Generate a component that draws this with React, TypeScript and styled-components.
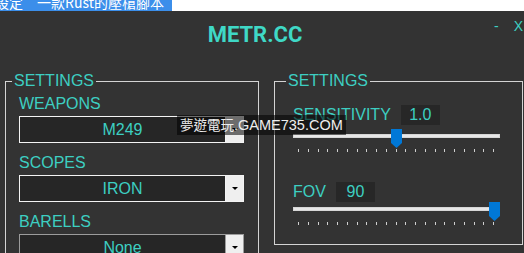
import React from 'react';
import styled, { createGlobalStyle } from 'styled-components';

const TEAL = '#3dcfc2';

const GlobalStyle = createGlobalStyle`
  html, body {
    margin: 0;
    padding: 0;
    background: #ffffff;
  }
  body {
    font-family: 'Liberation Sans', Arial, sans-serif;
  }
`;

interface SelectProps {
  value: string;
  active?: boolean;
}

const Dropdown: React.FC<SelectProps> = ({ value, active }) => (
  <Select $active={active}>
    <SelectValue>{value}</SelectValue>
    <SelectButton $active={active}>
      <Caret />
    </SelectButton>
  </Select>
);

interface SliderProps {
  label: string;
  value: string;
  fraction: number;
  offset: number;
}

const TRACK_WIDTH = 207;
const TICKS = 21;

const SliderField: React.FC<SliderProps> = ({ label, value, fraction, offset }) => {
  const center = 5 + fraction * (TRACK_WIDTH - 11);
  return (
    <SliderBlock>
      <ValueRow>
        <Label>{label}</Label>
        <ValueBox>{value}</ValueBox>
      </ValueRow>
      <TrackArea $offset={offset}>
        <Track />
        <Thumb
          style={{ left: center - 5 }}
          width="11"
          height="19"
          viewBox="0 0 11 19"
        >
          <polygon points="0,0 11,0 11,14 5.5,19 0,14" fill="#0078d7" />
        </Thumb>
      </TrackArea>
      <Ticks>
        {Array.from({ length: TICKS }).map((_, i) => (
          <Tick key={i} />
        ))}
      </Ticks>
    </SliderBlock>
  );
};

const App: React.FC = () => {
  return (
    <>
      <GlobalStyle />
      <TopStrip>
        <Tab>
          <TabText>設定　一款Rust的壓槍腳本</TabText>
        </Tab>
      </TopStrip>

      <Window>
        <TitleBar>
          <span />
          <Title>METR.CC</Title>
          <Controls>
            <span>-</span>
            <span>X</span>
          </Controls>
        </TitleBar>

        <Body>
          <LeftGroup>
            <Legend>SETTINGS</Legend>
            <Field>
              <Label>WEAPONS</Label>
              <Dropdown value="M249" active />
            </Field>
            <Field>
              <Label>SCOPES</Label>
              <Dropdown value="IRON" active />
            </Field>
            <Field>
              <Label>BARELLS</Label>
              <Dropdown value="None" />
            </Field>
          </LeftGroup>

          <RightGroup>
            <Legend>SETTINGS</Legend>
            <SliderField label="SENSITIVITY" value="1.0" fraction={0.5} offset={4} />
            <SliderField label="FOV" value="90" fraction={1} offset={0} />
          </RightGroup>
        </Body>

        <Watermark>
          <WatermarkCjk>夢遊電玩</WatermarkCjk>.GAME735.COM
        </Watermark>
      </Window>
    </>
  );
};

export default App;

// Styles
const TopStrip = styled.div`
  display: flex;
  height: 11px;
  background: #ffffff;
`;

const Tab = styled.div`
  width: 172px;
  background: #3b8eea;
  overflow: hidden;
  display: flex;
  align-items: flex-end;
`;

const TabText = styled.span`
  margin-left: -5px;
  margin-bottom: 1px;
  color: #ffffff;
  font-family: 'Noto Sans CJK TC', 'Liberation Sans', sans-serif;
  font-size: 14px;
  line-height: 16px;
  white-space: nowrap;
`;

const Window = styled.div`
  position: relative;
  height: 242px;
  background: #333333;
  overflow: hidden;
`;

const TitleBar = styled.div`
  display: grid;
  grid-template-columns: 1fr auto 1fr;
  align-items: start;
`;

const Title = styled.div`
  margin-top: 11px;
  margin-right: 14px;
  font-family: Roboto, 'Liberation Sans', sans-serif;
  font-weight: 700;
  font-size: 22px;
  line-height: 26px;
  color: #3fd8c6;
`;

const Controls = styled.div`
  justify-self: end;
  display: flex;
  gap: 15px;
  margin-top: 7px;
  padding-right: 1px;
  color: ${TEAL};
  font-size: 14px;
  line-height: 16px;
`;

const Body = styled.div`
  display: flex;
  align-items: flex-start;
  gap: 15px;
  padding-left: 5px;
  margin-top: 24px;
`;

const GroupBase = styled.fieldset`
  margin: 0;
  min-width: 0;
  box-sizing: border-box;
  border: 1px solid #d4d4d4;
`;

const LeftGroup = styled(GroupBase)`
  width: 254px;
  height: 220px;
  padding: 5px 13px 0 13px;
  display: flex;
  flex-direction: column;
  gap: 11px;
`;

const RightGroup = styled(GroupBase)`
  width: 249px;
  padding: 15px 21px 19px 18px;
  display: flex;
  flex-direction: column;
  gap: 30px;
`;

const Legend = styled.legend`
  margin-left: -7px;
  padding: 0 2px;
  color: ${TEAL};
  font-size: 16px;
  line-height: 18px;
`;

const Field = styled.div`
  display: flex;
  flex-direction: column;
  gap: 3px;
`;

const Label = styled.div`
  color: ${TEAL};
  font-size: 16px;
  line-height: 18px;
`;

const Select = styled.div<{ $active?: boolean }>`
  display: flex;
  width: 225px;
  height: 27px;
  box-sizing: border-box;
  border: 1px solid ${(p) => (p.$active ? '#f4f4f4' : '#9c9c9c')};
  background: #262626;
`;

const SelectValue = styled.div`
  flex: 1;
  display: flex;
  align-items: center;
  justify-content: center;
  color: ${TEAL};
  font-size: 16px;
`;

const SelectButton = styled.div<{ $active?: boolean }>`
  width: 17px;
  border-left: 1px solid ${(p) => (p.$active ? '#f4f4f4' : '#9c9c9c')};
  background: #efefef;
  display: flex;
  align-items: center;
  justify-content: center;
`;

const Caret = styled.div`
  width: 0;
  height: 0;
  border-left: 3px solid transparent;
  border-right: 3px solid transparent;
  border-top: 3px solid #000000;
`;

const SliderBlock = styled.div`
  display: flex;
  flex-direction: column;
`;

const ValueRow = styled.div`
  display: flex;
  align-items: center;
  gap: 10px;
`;

const ValueBox = styled.div`
  width: 39px;
  height: 20px;
  background: #272727;
  color: ${TEAL};
  font-size: 16px;
  line-height: 20px;
  text-align: center;
`;

const TrackArea = styled.div<{ $offset: number }>`
  position: relative;
  width: ${TRACK_WIDTH}px;
  height: 20px;
  margin-top: ${(p) => p.$offset}px;
`;

const Track = styled.div`
  position: absolute;
  left: 0;
  right: 0;
  top: 5px;
  height: 4px;
  box-sizing: border-box;
  background: #e7e7e7;
  border: 1px solid #d6d6d6;
`;

const Thumb = styled.svg`
  position: absolute;
  top: 0;
  display: block;
`;

const Ticks = styled.div`
  display: flex;
  justify-content: space-between;
  width: ${TRACK_WIDTH}px;
  box-sizing: border-box;
  padding: 0 6px 0 5px;
  height: 3px;
`;

const Tick = styled.div`
  width: 1px;
  height: 3px;
  background: #cfcfcf;
`;

const Watermark = styled.div`
  position: absolute;
  left: 177px;
  top: 104px;
  padding: 1px 3px;
  background: rgba(0, 0, 0, 0.55);
  color: #eeeeee;
  font-family: 'Liberation Sans', sans-serif;
  font-size: 14.5px;
  line-height: 17px;
  white-space: nowrap;
`;

const WatermarkCjk = styled.span`
  font-family: 'Noto Sans CJK TC', sans-serif;
  font-size: 13.5px;
`;
